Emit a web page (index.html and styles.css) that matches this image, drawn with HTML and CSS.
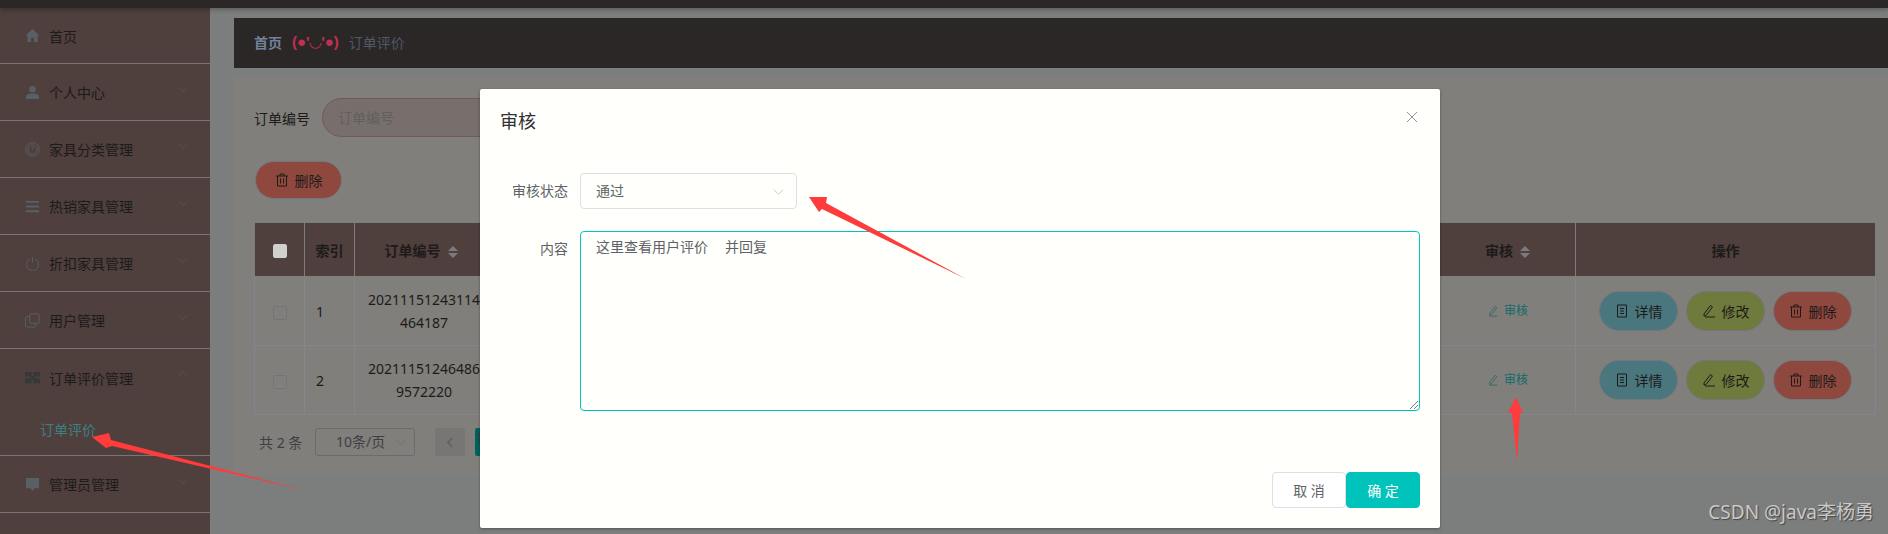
FILE: index.html
```html
<!DOCTYPE html>
<html lang="zh-CN">
<head>
  <meta charset="UTF-8">
  <meta name="viewport" content="width=device-width, initial-scale=1.0">
  <title>订单评价</title>
  <link rel="stylesheet" href="styles.css">
</head>
<body>
  <div class="topbar"></div>
  <div class="layout">
    <aside class="sidebar">
      <div class="menu-item first">
        <svg class="menu-icon" viewBox="0 0 16 16"><path d="M8 1 0.500 8H2.500v7h4v-4.500h3V15h4V8h2z"/></svg>
        <span>首页</span>
      </div>
      <div class="menu-item">
        <svg class="menu-icon" viewBox="0 0 16 16"><circle cx="8" cy="4.500" r="3.500"/><path d="M1 15v-2.500C1 10 4 9 8 9s7 1 7 3.500V15z"/></svg>
        <span>个人中心</span>
        <svg class="chevron" viewBox="0 0 12 12"><path d="M1 4l5 5 5-5"/></svg>
      </div>
      <div class="menu-item">
        <svg class="menu-icon line" viewBox="0 0 16 16"><circle cx="8" cy="8" r="7.200"/><circle cx="8" cy="8" r="4.800"/><path d="M8 8l1-3"/></svg>
        <span>家具分类管理</span>
        <svg class="chevron" viewBox="0 0 12 12"><path d="M1 4l5 5 5-5"/></svg>
      </div>
      <div class="menu-item">
        <svg class="menu-icon" viewBox="0 0 16 16"><path d="M1 2h14v2H1zM1 7h14v2H1zM1 12h14v2H1z"/></svg>
        <span>热销家具管理</span>
        <svg class="chevron" viewBox="0 0 12 12"><path d="M1 4l5 5 5-5"/></svg>
      </div>
      <div class="menu-item">
        <svg class="menu-icon line" viewBox="0 0 16 16"><path d="M5 3.200a6.500 6.500 0 1 0 6 0M8 1v6"/></svg>
        <span>折扣家具管理</span>
        <svg class="chevron" viewBox="0 0 12 12"><path d="M1 4l5 5 5-5"/></svg>
      </div>
      <div class="menu-item">
        <svg class="menu-icon line" viewBox="0 0 16 16"><rect x="5" y="1" width="10" height="10" rx="1"/><path d="M5 4H1.500a1 1 0 0 0-1 1v9a1 1 0 0 0 1 1h9a1 1 0 0 0 1-1v-3"/></svg>
        <span>用户管理</span>
        <svg class="chevron" viewBox="0 0 12 12"><path d="M1 4l5 5 5-5"/></svg>
      </div>
      <div class="menu-group">
        <div class="menu-title">
          <svg class="menu-icon dark" viewBox="0 0 16 16"><path d="M0 2h7v5H0zM9 2h7v5H9zM0 9h7v5H0zM9 9h7v5H9zM6 6h4v4H6z"/></svg>
          <span>订单评价管理</span>
          <svg class="chevron" viewBox="0 0 12 12"><path d="M1 8l5-5 5 5"/></svg>
        </div>
        <div class="submenu-item">订单评价</div>
      </div>
      <div class="menu-item">
        <svg class="menu-icon" viewBox="0 0 16 16"><path d="M1 1h14v11h-5l-2 3-2-3H1z"/></svg>
        <span>管理员管理</span>
        <svg class="chevron" viewBox="0 0 12 12"><path d="M1 4l5 5 5-5"/></svg>
      </div>
    </aside>

    <main class="main">
      <div class="crumbs">
        <b>首页</b>
        <span class="face">(●'◡'●)</span>
        <span class="crumb-current">订单评价</span>
      </div>
      <section class="card">
        <div class="search-row">
          <label>订单编号</label>
          <div class="search-input">订单编号</div>
        </div>
        <button class="btn btn-red btn-top">
          <svg class="btn-icon" viewBox="0 0 14 14"><path d="M1 3h12M5 3V1h4v2M2.500 3v10h9V3M5.500 5.500v5M8.500 5.500v5"/></svg>删除
        </button>
        <table class="grid">
          <colgroup>
            <col class="c-check"><col class="c-index"><col class="c-order"><col class="c-rest"><col class="c-audit"><col class="c-ops">
          </colgroup>
          <thead>
            <tr>
              <th><span class="check check-head"></span></th>
              <th>索引</th>
              <th class="order-head">订单编号<i class="sort"></i></th>
              <th></th>
              <th>审核<i class="sort"></i></th>
              <th>操作</th>
            </tr>
          </thead>
          <tbody>
            <tr>
              <td><span class="check"></span></td>
              <td class="left">1</td>
              <td>20211151243114<br>464187</td>
              <td></td>
              <td><a class="audit-link"><svg class="link-icon" viewBox="0 0 14 14"><path d="M3 10 9.500 1.500l2 1.500L5 11.500 3 12zM3 13h9"/></svg>审核</a></td>
              <td>
                <div class="ops">
                  <button class="btn btn-cyan"><svg class="btn-icon" viewBox="0 0 14 14"><path d="M2.500 1h9v12h-9zM5 4.500h4M5 7h4M5 9.500h4"/></svg>详情</button>
                  <button class="btn btn-olive"><svg class="btn-icon" viewBox="0 0 14 14"><path d="M2 10 8.500 1.500l2 1.500L4 11.500 2 12zM3 13h10"/></svg>修改</button>
                  <button class="btn btn-red"><svg class="btn-icon" viewBox="0 0 14 14"><path d="M1 3h12M5 3V1h4v2M2.500 3v10h9V3M5.500 5.500v5M8.500 5.500v5"/></svg>删除</button>
                </div>
              </td>
            </tr>
            <tr>
              <td><span class="check"></span></td>
              <td class="left">2</td>
              <td>20211151246486<br>9572220</td>
              <td></td>
              <td><a class="audit-link"><svg class="link-icon" viewBox="0 0 14 14"><path d="M3 10 9.500 1.500l2 1.500L5 11.500 3 12zM3 13h9"/></svg>审核</a></td>
              <td>
                <div class="ops">
                  <button class="btn btn-cyan"><svg class="btn-icon" viewBox="0 0 14 14"><path d="M2.500 1h9v12h-9zM5 4.500h4M5 7h4M5 9.500h4"/></svg>详情</button>
                  <button class="btn btn-olive"><svg class="btn-icon" viewBox="0 0 14 14"><path d="M2 10 8.500 1.500l2 1.500L4 11.500 2 12zM3 13h10"/></svg>修改</button>
                  <button class="btn btn-red"><svg class="btn-icon" viewBox="0 0 14 14"><path d="M1 3h12M5 3V1h4v2M2.500 3v10h9V3M5.500 5.500v5M8.500 5.500v5"/></svg>删除</button>
                </div>
              </td>
            </tr>
          </tbody>
        </table>
        <div class="pager">
          <span class="total">共 2 条</span>
          <div class="page-size">10条/页<svg class="chevron-sm" viewBox="0 0 12 12"><path d="M1 4l5 5 5-5"/></svg></div>
          <span class="page-prev"><svg viewBox="0 0 12 12"><path d="M8 1 3 6l5 5"/></svg></span>
          <span class="page-num">1</span>
        </div>
      </section>
    </main>
  </div>

  <div class="dialog">
    <div class="dialog-head">
      <span>审核</span>
      <svg class="close" viewBox="0 0 12 12"><path d="M1 1l10 10M11 1 1 11"/></svg>
    </div>
    <div class="dialog-body">
      <div class="form-row">
        <label>审核状态</label>
        <div class="select">通过<svg class="select-arrow" viewBox="0 0 12 12"><path d="M1 4l5 5 5-5"/></svg></div>
      </div>
      <div class="form-row">
        <label>内容</label>
        <div class="textarea">这里查看用户评价&nbsp;&nbsp;&nbsp;并回复
          <svg class="grip" viewBox="0 0 8 8"><path d="M8 0 0 8M8 4 4 8"/></svg>
        </div>
      </div>
    </div>
    <div class="dialog-foot">
      <button class="foot-btn">取 消</button>
      <button class="foot-btn primary">确 定</button>
    </div>
  </div>

  <svg class="arrows" viewBox="0 0 1888 534">
    <polygon points="92,437 109,433 111,440 307,491 112,446 106,448"/>
    <polygon points="809,197 827,197 826,203 966,279 822,209 819,212"/>
    <polygon points="1516,397 1523,413 1520,413 1517,461 1512,413 1508,413"/>
  </svg>

  <div class="watermark">CSDN @java李杨勇</div>
</body>
</html>
```

FILE: styles.css
```css
* {
  box-sizing: border-box;
}
html, body {
  height: 100%;
}
body {
  margin: 0;
  overflow: hidden;
  position: relative;
  display: flex;
  flex-direction: column;
  background: #7c7e7d;
  font-family: "Noto Sans", "Noto Sans CJK SC", sans-serif;
  font-size: 14px;
  color: #1d1b1a;
}
.topbar {
  height: 8px;
  flex: none;
  background: #2c2727;
  box-shadow: 0 2px 4px rgba(0,0,0,0.25);
  position: relative;
}
.layout {
  flex: 1;
  display: flex;
  min-height: 0;
}

/* sidebar */
.sidebar {
  width: 210px;
  flex: none;
  background: #4f3f3d;
}
.menu-item, .menu-title {
  height: 57px;
  display: flex;
  align-items: center;
  padding-left: 25px;
  position: relative;
}
.menu-item {
  border-bottom: 1px solid #7a7472;
}
.menu-item.first {
  height: 56px;
}
.menu-group {
  height: 107px;
  border-bottom: 1px solid #7a7472;
}
.menu-icon {
  width: 15px;
  height: 15px;
  margin-right: 9px;
  fill: #586066;
}
.menu-icon.line {
  fill: none;
  stroke: #586066;
  stroke-width: 1;
}
.menu-icon.dark {
  fill: #36383c;
}
.chevron {
  position: absolute;
  right: 22px;
  top: 20px;
  width: 10px;
  height: 10px;
  fill: none;
  stroke: #5f5553;
  stroke-width: 1;
}
.submenu-item {
  padding-left: 40px;
  margin-top: 14px;
  line-height: 20px;
  color: #3d8083;
}

/* main area */
.main {
  flex: 1;
  min-width: 0;
  padding: 10px 0 0 24px;
}
.crumbs {
  height: 50px;
  display: flex;
  align-items: center;
  padding: 0 0 2px 20px;
  background: #2c2727;
  color: #4f5967;
}
.crumbs b {
  color: #71839b;
}
.face {
  margin: 0 10px;
  font-family: "Liberation Sans", "DejaVu Sans", sans-serif;
  font-size: 15px;
  color: #c22f52;
  font-weight: bold;
}
.card {
  margin-top: 10px;
  height: 398px;
  padding: 20px;
  background: #807f7c;
}
.search-row {
  display: flex;
  align-items: center;
  height: 39px;
}
.search-row label {
  width: 68px;
}
.search-input {
  width: 320px;
  height: 39px;
  line-height: 37px;
  padding-left: 15px;
  border: 1px solid #6f5a58;
  border-radius: 20px;
  background: #786f6c;
  color: #605e60;
}
.btn {
  display: inline-flex;
  align-items: center;
  justify-content: center;
  width: 79px;
  height: 40px;
  padding: 0;
  border: 1px solid #72767f;
  border-radius: 20px;
  font: inherit;
  color: #1d1b1a;
}
.btn-top {
  display: flex;
  width: 87px;
  height: 38px;
  margin: 24px 0 23px 1px;
}
.btn-red {
  background: #8e483e;
}
.btn-cyan {
  background: #4a767d;
}
.btn-olive {
  background: #6f7a3d;
}
.btn-icon {
  width: 14px;
  height: 14px;
  margin-right: 6px;
  fill: none;
  stroke: #1d1b1a;
  stroke-width: 1;
}

/* table */
.grid {
  width: 1622px;
  table-layout: fixed;
  border-collapse: collapse;
}
.c-check, .c-index { width: 50px; }
.c-order { width: 139px; }
.c-audit { width: 136px; }
.c-ops { width: 300px; }
.grid th {
  height: 54px;
  background: #4f3f3d;
  border: 1px solid #7f7e7c;
  font-weight: 600;
  text-align: center;
}
.grid th.order-head {
  padding-right: 7px;
}
.grid td {
  height: 69px;
  border: 1px solid #85848f;
  text-align: center;
  line-height: 23px;
}
.grid td.left {
  text-align: left;
  padding-left: 11px;
}
.check {
  display: inline-block;
  width: 14px;
  height: 14px;
  vertical-align: middle;
  border: 1px solid #74737a;
  border-radius: 2px;
  background: #807f7c;
}
.check-head {
  background: #d0cfcc;
  border-color: #d0cfcc;
}
.sort {
  display: inline-flex;
  flex-direction: column;
  justify-content: space-between;
  width: 10px;
  height: 12px;
  margin-left: 7px;
  vertical-align: middle;
}
.sort::before, .sort::after {
  content: "";
  border-left: 5px solid transparent;
  border-right: 5px solid transparent;
}
.sort::before {
  border-bottom: 5px solid #7d797c;
}
.sort::after {
  border-top: 5px solid #7d797c;
}
.audit-link {
  display: inline-flex;
  align-items: center;
  font-size: 12px;
  color: #0f6a68;
}
.link-icon {
  width: 12px;
  height: 12px;
  margin-right: 5px;
  fill: none;
  stroke: #2f6664;
  stroke-width: 1;
}
.ops {
  display: flex;
  justify-content: center;
  gap: 8px;
}

/* pager */
.pager {
  display: flex;
  align-items: center;
  height: 32px;
  margin-top: 11px;
  padding-left: 5px;
  color: #3f3e3e;
}
.total {
  width: 56px;
}
.page-size {
  width: 100px;
  height: 28px;
  line-height: 26px;
  padding-left: 20px;
  border: 1px solid #6b6b6f;
  border-radius: 3px;
  position: relative;
}
.chevron-sm {
  position: absolute;
  right: 8px;
  top: 8px;
  width: 10px;
  height: 10px;
  fill: none;
  stroke: #6e6c6e;
}
.page-prev {
  width: 30px;
  height: 28px;
  margin-left: 20px;
  display: flex;
  align-items: center;
  justify-content: center;
  background: #777675;
  border-radius: 2px;
}
.page-prev svg {
  width: 11px;
  height: 11px;
  fill: none;
  stroke: #5f5f62;
  stroke-width: 1.500;
}
.page-num {
  width: 30px;
  height: 28px;
  margin-left: 10px;
  background: #00625e;
  border-radius: 2px;
}

/* dialog */
.dialog {
  position: absolute;
  left: 480px;
  top: 89px;
  width: 960px;
  height: 439px;
  display: flex;
  flex-direction: column;
  background: #fffffc;
  border-radius: 2px;
  box-shadow: 0 1px 3px rgba(0,0,0,0.35);
  color: #606266;
}
.dialog-head {
  display: flex;
  align-items: flex-start;
  justify-content: space-between;
  padding: 20px 22px 0 20px;
  height: 56px;
  font-size: 18px;
  line-height: 24px;
  color: #303133;
}
.close {
  width: 12px;
  height: 12px;
  margin-top: 2px;
  fill: none;
  stroke: #909399;
  stroke-width: 1;
}
.dialog-body {
  flex: 1;
  padding: 28px 20px 0;
}
.form-row {
  display: flex;
  margin-bottom: 22px;
}
.form-row label {
  width: 80px;
  padding-right: 12px;
  line-height: 36px;
  text-align: right;
}
.select {
  width: 217px;
  height: 36px;
  line-height: 34px;
  padding-left: 15px;
  border: 1px solid #dcdfe6;
  border-radius: 4px;
  position: relative;
}
.select-arrow {
  position: absolute;
  right: 12px;
  top: 12px;
  width: 11px;
  height: 11px;
  fill: none;
  stroke: #c0c4cc;
}
.textarea {
  width: 840px;
  height: 180px;
  padding: 4px 15px;
  line-height: 21px;
  word-spacing: 2px;
  border: 1px solid #00c4bc;
  border-radius: 4px;
  position: relative;
}
.grip {
  position: absolute;
  right: 1px;
  bottom: 1px;
  width: 8px;
  height: 8px;
  fill: none;
  stroke: #777;
  stroke-width: 1;
}
.dialog-foot {
  display: flex;
  justify-content: flex-end;
  padding: 0 20px 20px;
}
.foot-btn {
  width: 74px;
  height: 36px;
  border: 1px solid #dcdfe6;
  border-radius: 4px;
  background: #fff;
  font: inherit;
  color: #606266;
}
.foot-btn.primary {
  border-color: #00c4bc;
  background: #00c4bc;
  color: #fff;
}

/* screenshot annotations */
.arrows {
  position: absolute;
  left: 0;
  top: 0;
  width: 1888px;
  height: 534px;
  pointer-events: none;
  fill: #ff3b3b;
}
.watermark {
  position: absolute;
  right: 14px;
  bottom: 9px;
  font-size: 19px;
  color: #c9c9c7;
  text-shadow: 1px 1px 1px #444;
}
```
